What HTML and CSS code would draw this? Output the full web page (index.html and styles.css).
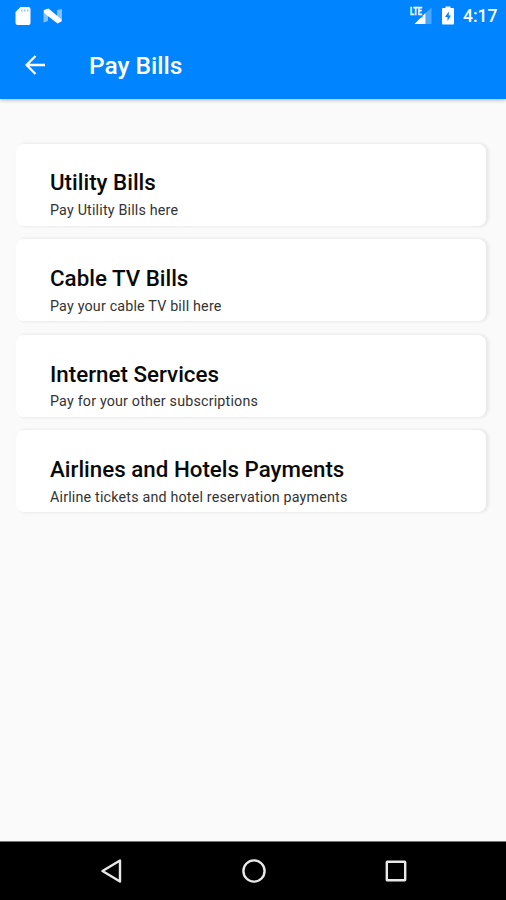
FILE: index.html
```html
<!DOCTYPE html>
<html lang="en">
<head>
<meta charset="utf-8">
<title>Pay Bills</title>
<link rel="stylesheet" href="styles.css">
</head>
<body>
<header class="top">
  <div class="status">
    <svg class="sd" width="16" height="20" viewBox="0 0 16 20"><path fill="#fff" d="M5.500 1H13.500Q15.500 1 15.500 3V17Q15.500 19 13.500 19H2.500Q.5 19 .5 17V6Z"/><path fill="#8dc7ff" d="M6 3.500H7.500V5.500H6ZM9 3.500H10.500V5.500H9ZM12 3.500H13.500V5.500H12Z"/></svg>
    <svg class="n" width="20" height="16" viewBox="0 0 20 16"><path fill="#7fc1ff" d="M.5 2L5 4V13L.5 14.500ZM14 2L19 1V13L14 11Z"/><path fill="#fff" d="M1 2L5.500 .5L18.500 11.500V13.500L14.500 15.500L1 5Z"/></svg>
    <span class="space"></span>
    <svg class="signal" width="22" height="19" viewBox="0 0 22 19"><path fill="#4ca8ff" d="M15.500 7L21.500 1.500V18H15.500Z"/><path fill="#fff" d="M4.500 18L15.500 7V18Z"/><path fill="none" stroke="#0084ff" stroke-width="2" d="M0 10.500H12.500"/><text class="lte" x="0" y="8.500" textLength="12" lengthAdjust="spacingAndGlyphs">LTE</text></svg>
    <svg class="battery" width="12" height="19" viewBox="0 0 12 19"><path fill="#fff" d="M3.500 2V.5H8.500V2H11Q12 2 12 3V17.500Q12 18.500 11 18.500H1Q0 18.500 0 17.500V3Q0 2 1 2Z"/><path fill="#0084ff" d="M6.800 5.500L3 11H5.500V15L9 9.500H6.800Z"/></svg>
    <span class="time">4:17</span>
  </div>
  <div class="bar">
    <svg class="back" width="20" height="20" viewBox="0 0 20 20"><path fill="none" stroke="#fff" stroke-width="2.300" d="M20 10H2M10.500 1L1.600 10L10.500 19"/></svg>
    <h1>Pay Bills</h1>
  </div>
</header>
<main class="list">
  <section class="card"><h2>Utility Bills</h2><p>Pay Utility Bills here</p></section>
  <section class="card"><h2>Cable TV Bills</h2><p>Pay your cable TV bill here</p></section>
  <section class="card"><h2>Internet Services</h2><p>Pay for your other subscriptions</p></section>
  <section class="card"><h2>Airlines and Hotels Payments</h2><p>Airline tickets and hotel reservation payments</p></section>
</main>
<nav class="nav">
  <svg width="24" height="26" viewBox="0 0 24 26"><path d="M21 2.500V23.500L3.500 13Z"/></svg>
  <svg width="26" height="26" viewBox="0 0 26 26"><circle cx="13" cy="13" r="10.600"/></svg>
  <svg width="24" height="26" viewBox="0 0 24 26"><rect x="2.800" y="3.800" width="18.400" height="18.400" rx=".5"/></svg>
</nav>
</body>
</html>
```
FILE: styles.css
```css
* { box-sizing: border-box; }
body {
  margin: 0;
  height: 900px;
  display: flex;
  flex-direction: column;
  background: #fafafa;
  font-family: Roboto, sans-serif;
  overflow: hidden;
}
h1, h2, p { margin: 0; }
.top {
  height: 99px;
  background: #0084ff;
  color: #fff;
  box-shadow: 0 1px 4px rgba(0, 0, 0, .3);
}
.status { height: 32px; display: flex; align-items: center; padding: 0 9px 0 15px; }
.sd { margin-top: -1px; }
.n { margin-left: 12px; margin-top: -1px; }
.space { flex: 1; }
.signal { margin-top: -1px; overflow: visible; }
.lte { font-size: 10px; font-weight: 700; fill: #fff; stroke: #fff; stroke-width: .3px; }
.battery { margin: -1px 9px 0 10px; }
.time { font-size: 17.500px; font-weight: 500; line-height: 32px; width: 34px; white-space: nowrap; }
.bar { height: 67px; display: flex; align-items: center; padding-left: 25px; }
.back { margin-top: -1px; }
h1 { margin-left: 44px; font-size: 24.500px; font-weight: 500; line-height: 30px; }
.list {
  flex: 1;
  padding: 44.600px 20px 0 16px;
  display: flex;
  flex-direction: column;
  gap: 13.600px;
}
.card {
  height: 82px;
  padding: 24.800px 34px 0;
  border-radius: 8px;
  background: #fff;
  box-shadow: 2px 0 3px 1px rgba(0, 0, 0, .07);
}
.card h2 { font-size: 22.350px; font-weight: 500; line-height: 28px; color: #0a0a0a; white-space: nowrap; }
.card p { font-size: 14.300px; letter-spacing: .180px; line-height: 18px; margin-top: 4.600px; color: #333; white-space: nowrap; }
.nav {
  height: 59px;
  background: #000;
  border-top: 1px solid #777;
  display: flex;
  justify-content: space-between;
  align-items: center;
  padding: 0 98px 0 99px;
}
.nav svg { fill: none; stroke: #e8e8e8; stroke-width: 2.400; stroke-linejoin: round; }
```
